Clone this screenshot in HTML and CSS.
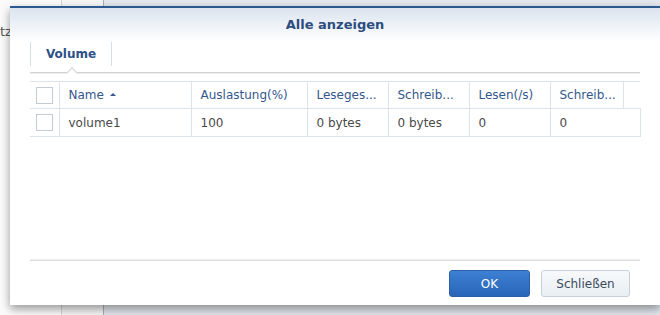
FILE: index.html
```html
<!DOCTYPE html>
<html lang="de">
<head>
    <meta charset="UTF-8">
    <title>Alle anzeigen</title>
    <link rel="stylesheet" href="styles.css">
</head>
<body>
    <div class="backdrop">
        <div class="side">
            <span class="side-label">tz</span>
        </div>
        <div class="strip"></div>
        <div class="main"></div>
    </div>

    <div class="dialog">
        <div class="dialog-header">Alle anzeigen</div>
        <div class="dialog-body">
            <div class="tabs">
                <div class="tab active">Volume</div>
            </div>
            <table class="grid">
                <colgroup>
                    <col class="c-check">
                    <col class="c-name">
                    <col class="c-usage">
                    <col class="c-mid">
                    <col class="c-mid">
                    <col class="c-mid">
                    <col class="c-last">
                    <col class="c-scroll">
                </colgroup>
                <thead>
                    <tr>
                        <th><span class="checkbox"></span></th>
                        <th>Name <span class="sort-asc"></span></th>
                        <th>Auslastung(%)</th>
                        <th>Leseges...</th>
                        <th>Schreib...</th>
                        <th>Lesen(/s)</th>
                        <th>Schreib...</th>
                        <th class="scroll"></th>
                    </tr>
                </thead>
                <tbody>
                    <tr>
                        <td><span class="checkbox"></span></td>
                        <td>volume1</td>
                        <td>100</td>
                        <td>0 bytes</td>
                        <td>0 bytes</td>
                        <td>0</td>
                        <td colspan="2">0</td>
                    </tr>
                </tbody>
            </table>
        </div>
        <div class="dialog-footer">
            <button class="btn btn-primary">OK</button>
            <button class="btn">Schließen</button>
        </div>
    </div>
</body>
</html>
```

FILE: styles.css
```css
body {
    margin: 0;
    width: 660px;
    height: 315px;
    overflow: hidden;
    position: relative;
    font-family: "DejaVu Sans", Verdana, sans-serif;
    font-size: 12px;
    background: #fff;
}

.backdrop {
    display: flex;
    height: 315px;
}

.side {
    width: 62px;
    background: #fbfbfb;
    border-right: 1px solid #d4d6d9;
    padding-top: 24px;
    box-sizing: border-box;
}

.side-label {
    font-size: 13px;
    color: #555;
}

.strip {
    width: 42px;
    background: #f6f6f7;
    border-right: 1px solid #aab1bb;
    box-sizing: border-box;
}

.main {
    flex: 1;
    background: #e3e7ee;
}

.dialog {
    position: absolute;
    left: 10px;
    top: 6px;
    width: 650px;
    height: 299px;
    box-sizing: border-box;
    background: #fff;
    border-top: 2px solid #2c5890;
    box-shadow: 0 4px 9px rgba(0, 0, 0, 0.4);
    display: flex;
    flex-direction: column;
}

.dialog-header {
    height: 34px;
    line-height: 34px;
    padding-bottom: 2px;
    box-sizing: border-box;
    text-align: center;
    font-size: 13px;
    font-weight: bold;
    color: #2d4d7e;
    background: linear-gradient(#dbe4ef, #fff);
}

.dialog-body {
    flex: 1;
    padding: 0 20px;
}

.tabs {
    display: flex;
    height: 30px;
    border-bottom: 1px solid #d2d2d2;
    box-shadow: 0 1px 0 #ededed;
}

.tab {
    width: 80px;
    height: 24px;
    line-height: 24px;
    text-align: center;
    border-left: 1px solid #d6dde6;
    border-right: 1px solid #d6dde6;
    font-weight: bold;
    color: #2d5188;
    position: relative;
}

.tab.active::after {
    content: "";
    position: absolute;
    left: 37px;
    top: 27px;
    width: 7px;
    height: 7px;
    background: #fff;
    border-top: 1px solid #d2d2d2;
    border-left: 1px solid #d2d2d2;
    transform: rotate(45deg);
}

.grid {
    margin-top: 8px;
    width: 610px;
    table-layout: fixed;
    border-collapse: collapse;
}

.c-check { width: 29px; }
.c-name { width: 132px; }
.c-usage { width: 116px; }
.c-mid { width: 81px; }
.c-last { width: 73px; }
.c-scroll { width: 17px; }

.grid th,
.grid td {
    text-align: left;
    font-weight: normal;
    padding: 0 0 0 9px;
    white-space: nowrap;
    overflow: hidden;
    border-right: 1px solid #dde3ea;
    border-bottom: 1px solid #dde3ea;
}

.grid th {
    height: 26px;
    color: #34578c;
    border-top: 1px solid #dde3ea;
}

.grid th.scroll {
    border-right: none;
}

.grid td {
    height: 27px;
    color: #4a4a4a;
}

.grid th:first-child,
.grid td:first-child {
    padding: 0 0 0 6px;
}

.checkbox {
    display: block;
    width: 15px;
    height: 15px;
    border: 1px solid #c4cbd5;
    background: #fff;
}

.sort-asc {
    display: inline-block;
    width: 0;
    height: 0;
    margin-left: 2px;
    vertical-align: 3px;
    border-left: 3px solid transparent;
    border-right: 3px solid transparent;
    border-bottom: 3px solid #34578c;
}

.dialog-footer {
    margin: 0 20px;
    border-top: 1px solid #dcdcdc;
    box-shadow: 0 -1px 0 #efefef;
    padding: 9px 10px 8px 0;
    display: flex;
    justify-content: flex-end;
    gap: 11px;
}

.btn {
    height: 27px;
    box-sizing: border-box;
    border: 1px solid #c6d0dc;
    border-radius: 3px;
    background: linear-gradient(#f7f9fb, #e9eef3);
    font-family: "DejaVu Sans", Verdana, sans-serif;
    font-size: 12px;
    color: #3b4a5c;
    padding: 0;
    width: 89px;
}

.btn-primary {
    width: 81px;
    border-color: #2a60a8;
    background: linear-gradient(#3d80d3, #2965b8);
    color: #fff;
}
```
